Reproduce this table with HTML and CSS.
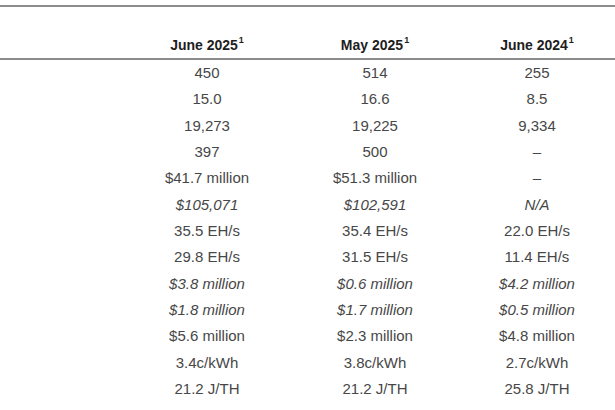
FILE: index.html
```html
<!DOCTYPE html>
<html lang="en">
<head>
<meta charset="utf-8">
<title>Monthly metrics</title>
<link rel="stylesheet" href="styles.css">
</head>
<body>
<div class="table">
  <div class="row head">
    <div class="cell label"></div>
    <div class="cell">June 2025<sup>1</sup></div>
    <div class="cell">May 2025<sup>1</sup></div>
    <div class="cell">June 2024<sup>1</sup></div>
  </div>
  <div class="row"><div class="cell label"></div><div class="cell">450</div><div class="cell">514</div><div class="cell">255</div></div>
  <div class="row"><div class="cell label"></div><div class="cell">15.0</div><div class="cell">16.6</div><div class="cell">8.5</div></div>
  <div class="row"><div class="cell label"></div><div class="cell">19,273</div><div class="cell">19,225</div><div class="cell">9,334</div></div>
  <div class="row"><div class="cell label"></div><div class="cell">397</div><div class="cell">500</div><div class="cell">–</div></div>
  <div class="row"><div class="cell label"></div><div class="cell">$41.7 million</div><div class="cell">$51.3 million</div><div class="cell">–</div></div>
  <div class="row italic"><div class="cell label"></div><div class="cell">$105,071</div><div class="cell">$102,591</div><div class="cell">N/A</div></div>
  <div class="row"><div class="cell label"></div><div class="cell">35.5 EH/s</div><div class="cell">35.4 EH/s</div><div class="cell">22.0 EH/s</div></div>
  <div class="row"><div class="cell label"></div><div class="cell">29.8 EH/s</div><div class="cell">31.5 EH/s</div><div class="cell">11.4 EH/s</div></div>
  <div class="row italic"><div class="cell label"></div><div class="cell">$3.8 million</div><div class="cell">$0.6 million</div><div class="cell">$4.2 million</div></div>
  <div class="row italic"><div class="cell label"></div><div class="cell">$1.8 million</div><div class="cell">$1.7 million</div><div class="cell">$0.5 million</div></div>
  <div class="row"><div class="cell label"></div><div class="cell">$5.6 million</div><div class="cell">$2.3 million</div><div class="cell">$4.8 million</div></div>
  <div class="row"><div class="cell label"></div><div class="cell">3.4c/kWh</div><div class="cell">3.8c/kWh</div><div class="cell">2.7c/kWh</div></div>
  <div class="row"><div class="cell label"></div><div class="cell">21.2 J/TH</div><div class="cell">21.2 J/TH</div><div class="cell">25.8 J/TH</div></div>
</div>
</body>
</html>
```
FILE: styles.css
```css
html, body {
  margin: 0;
  padding: 0;
  background: #ffffff;
}
body {
  padding-top: 5px;
  font-family: "Liberation Sans", Arial, sans-serif;
  color: #474747;
  font-size: 15px;
}
.table {
  border-top: 2px solid #8c8c8c;
}
.row {
  display: grid;
  grid-template-columns: 123px 168px 168px 156px;
  height: 26.33px;
  align-items: center;
}
.cell {
  text-align: center;
  white-space: nowrap;
  line-height: 20px;
}
.head {
  align-items: end;
  padding-bottom: 1px;
  box-sizing: border-box;
  border-bottom: 2px solid #8c8c8c;
  height: 53px;
}
.head .cell {
  font-weight: bold;
  color: #1e1e1e;
  font-size: 14px;
}
.head sup {
  font-size: 9px;
  vertical-align: 0;
  position: relative;
  top: -7px;
  margin-left: 1px;
}
.italic .cell {
  font-style: italic;
}
```
